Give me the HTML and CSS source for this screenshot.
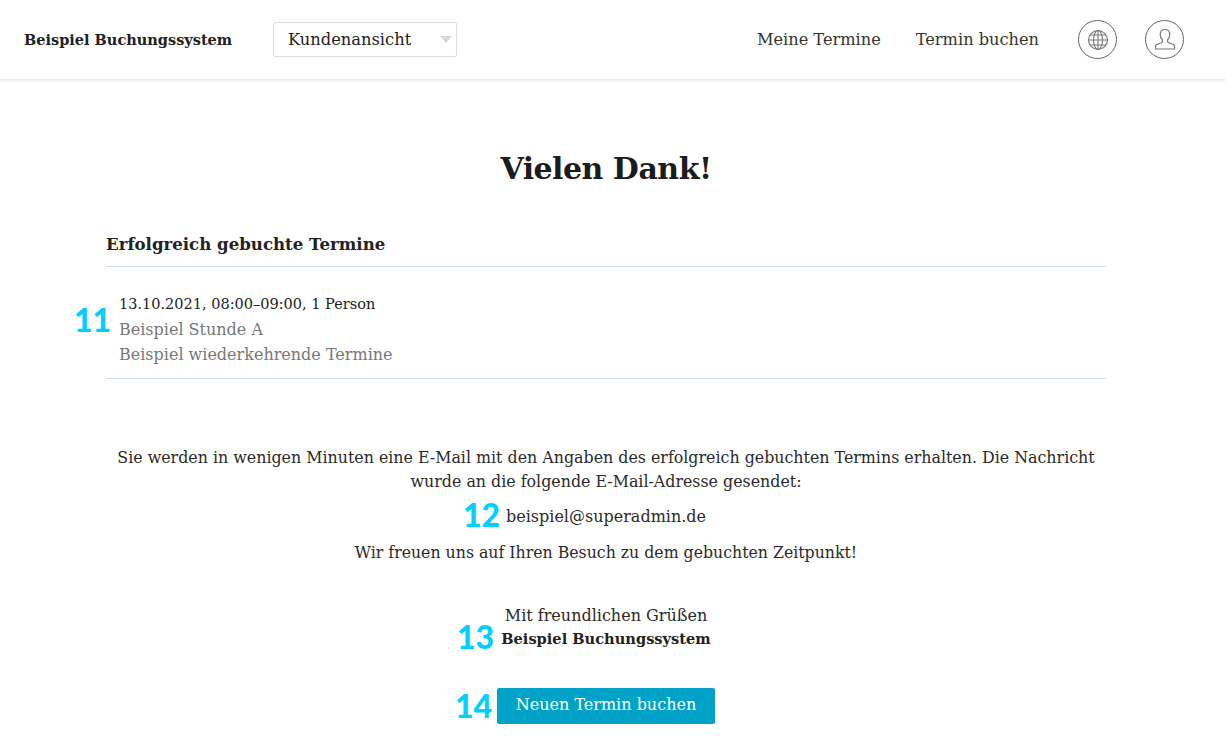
FILE: index.html
```html
<!DOCTYPE html>
<html lang="de">
<head>
  <meta charset="utf-8">
  <title>Beispiel Buchungssystem</title>
  <link rel="stylesheet" href="styles.css">
</head>
<body>
  <header class="topbar">
    <div class="brand">Beispiel Buchungssystem</div>
    <div class="view-select">
      <span>Kundenansicht</span>
      <i class="caret"></i>
    </div>
    <nav class="nav">
      <a href="#">Meine Termine</a>
      <a href="#">Termin buchen</a>
    </nav>
    <div class="round-btn first">
      <svg width="22" height="22" viewBox="0 0 22 22" fill="none" stroke="#777" stroke-width="1.1">
        <circle cx="11" cy="11" r="9.5"/>
        <ellipse cx="11" cy="11" rx="4.5" ry="9.5"/>
        <path d="M11 1.500v19M3 6h16M1.500 11h19M3 16h16"/>
      </svg>
    </div>
    <div class="round-btn">
      <svg width="22" height="23" viewBox="0 0 22 23" fill="none" stroke="#777" stroke-width="1.2">
        <path d="M11 1.500c-3 0-4.800 2-4.800 5 0 2.200 1 4.100 2.200 5.200v1.500c0 1-.7 1.500-1.600 1.800l-3.600 1.200c-1.200.4-1.700 1.200-1.700 2.400v2.400h19v-2.400c0-1.200-.5-2-1.700-2.400l-3.600-1.200c-.9-.3-1.600-.8-1.600-1.800v-1.500c1.200-1.100 2.200-3 2.200-5.200 0-3-1.800-5-4.800-5z"/>
      </svg>
    </div>
  </header>

  <main class="content">
    <h1>Vielen Dank!</h1>

    <section class="booked">
      <h2>Erfolgreich gebuchte Termine</h2>
      <div class="booked-item">
        <span class="mark mark-11">11</span>
        <div class="when">13.10.2021, 08:00–09:00, 1 Person</div>
        <div class="muted">Beispiel Stunde A</div>
        <div class="muted">Beispiel wiederkehrende Termine</div>
      </div>
    </section>

    <section class="message">
      <p class="mail-info">Sie werden in wenigen Minuten eine E-Mail mit den Angaben des erfolgreich gebuchten Termins erhalten. Die Nachricht wurde an die folgende E-Mail-Adresse gesendet:</p>
      <p class="mail-addr"><span class="mark mark-12">12</span>beispiel@superadmin.de</p>
      <p class="looking">Wir freuen uns auf Ihren Besuch zu dem gebuchten Zeitpunkt!</p>
      <p class="regards">
        <span class="mark mark-13">13</span>
        Mit freundlichen Grüßen<br>
        <strong>Beispiel Buchungssystem</strong>
      </p>
      <div class="action">
        <span class="mark mark-14">14</span>
        <a class="btn" href="#">Neuen Termin buchen</a>
      </div>
    </section>
  </main>
</body>
</html>
```

FILE: styles.css
```css
html, body {
  margin: 0;
  padding: 0;
  height: 746px;
  overflow: hidden;
}

body {
  font-family: "DejaVu Serif", serif;
  font-size: 16px;
  color: #222;
  background: white;
}

.topbar {
  height: 79px;
  display: flex;
  align-items: center;
  padding: 0 42px 0 24px;
  box-shadow: 0 1px 3px rgba(0,0,0,0.15);
  box-sizing: border-box;
}

.brand {
  font-weight: bold;
  font-size: 14.5px;
  width: 249px;
}

.view-select {
  width: 184px;
  height: 35px;
  box-sizing: border-box;
  border: 1px solid #ddd;
  border-radius: 2px;
  display: flex;
  align-items: center;
  justify-content: space-between;
  padding: 0 4px 0 14px;
  margin-top: -1px;
  font-size: 16.3px;
}

.caret {
  border-left: 6px solid transparent;
  border-right: 6px solid transparent;
  border-top: 7px solid #d5d5d5;
}

.nav {
  margin-left: auto;
  display: flex;
  gap: 35px;
  font-size: 16.2px;
}

.nav a {
  color: #333;
  text-decoration: none;
}

.round-btn {
  width: 39px;
  height: 39px;
  box-sizing: border-box;
  border: 1px solid #666;
  border-radius: 50%;
  margin-left: 28px;
  display: flex;
  align-items: center;
  justify-content: center;
}

.round-btn.first {
  margin-left: 39px;
}

.content {
  width: 1000px;
  margin-left: 106px;
}

h1 {
  margin: 69px 0 0;
  font-size: 30px;
  letter-spacing: -0.5px;
  line-height: 42px;
  text-align: center;
  color: #1c1c1c;
}

.booked {
  margin-top: 42px;
}

h2 {
  margin: 0;
  padding-bottom: 10px;
  font-size: 16.6px;
  line-height: 24px;
  border-bottom: 1px solid #cfdfe6;
}

.booked-item {
  position: relative;
  padding: 25px 13px 11px;
  line-height: 25px;
  border-bottom: 1px solid #cfdfe6;
}

.when {
  font-size: 14.5px;
}

.muted {
  color: #777;
}

.message {
  text-align: center;
  line-height: 24px;
  color: #2a2a2a;
}

.message p {
  margin: 0;
}

.mail-info {
  padding: 67px 0 0;
  font-size: 15.85px;
  line-height: 23.5px;
}

.mail-addr {
  position: relative;
  padding-top: 12px;
}

.looking {
  padding-top: 12px;
  font-size: 15.75px;
}

.regards {
  position: relative;
  padding-top: 39px;
  line-height: 23px;
}

.regards strong {
  font-size: 14.6px;
  color: #222;
}

.action {
  position: relative;
  margin-top: 38px;
}

.btn {
  display: inline-block;
  width: 218px;
  height: 36px;
  line-height: 34px;
  background: #00a2c7;
  color: white;
  border-radius: 2px;
  text-decoration: none;
}

.mark {
  position: absolute;
  font-family: "Lato", sans-serif;
  font-weight: 900;
  font-size: 32px;
  line-height: 36px;
  color: #00d0ff;
}

.mark-11 { left: -32px; top: 35px; }
.mark-12 { left: 357px; top: 4px; }
.mark-13 { left: 351px; top: 54px; }
.mark-14 { left: 349px; top: 0; }
```
